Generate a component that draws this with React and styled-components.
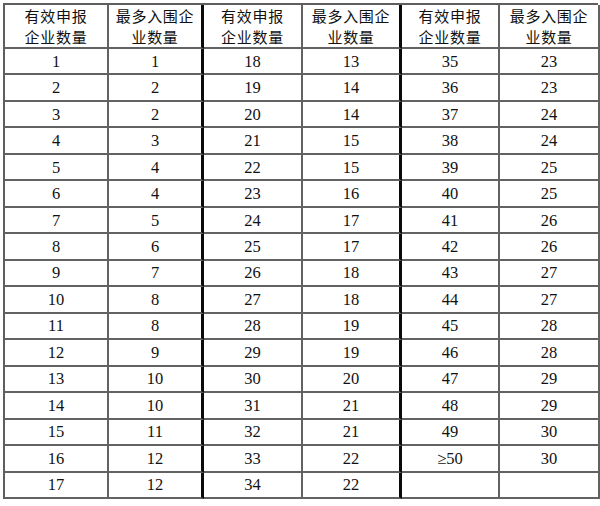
import React from "react";
import styled, { createGlobalStyle } from "styled-components";

const Global = createGlobalStyle`
  html, body { margin: 0; padding: 0; background: #fff; }
  body { width: 600px; height: 506px; overflow: hidden; }
`;

const Grid = styled.div`
  margin: 3px 0 0 3px;
  width: 595px;
  height: 496px;
  box-sizing: border-box;
  display: grid;
  grid-template-columns: 104px 95px 99px 99px 98px 100px;
  grid-template-rows: 44px repeat(17, 1fr);
  border-top: 2px solid #5e5e5e;
  border-left: 2px solid #5e5e5e;
`;

const Cell = styled.div`
  box-sizing: border-box;
  display: flex;
  align-items: center;
  justify-content: center;
  border-bottom: 2px solid #626262;
  border-right: ${(p) => (p.$thick ? "3px solid #0a0a0a" : "2px solid #626262")};
  font-family: "Liberation Serif", "Times New Roman", serif;
  font-size: 16.5px;
  color: #111;
  padding-top: 1px;
`;

const HeadCell = styled(Cell)`
  flex-direction: column;
  font-family: "Noto Sans CJK SC", "Noto Sans", sans-serif;
  font-size: 15px;
  font-weight: 400;
  letter-spacing: 0.7px;
  line-height: 21px;
  color: #111;
  padding-top: 0;
`;

const col2 = [1, 2, 2, 3, 4, 4, 5, 6, 7, 8, 8, 9, 10, 10, 11, 12, 12];
const col4 = [13, 14, 14, 15, 15, 16, 17, 17, 18, 18, 19, 19, 20, 21, 21, 22, 22];
const col6 = [23, 23, 24, 24, 25, 25, 26, 26, 27, 27, 28, 28, 29, 29, 30, 30, ""];

const rows = col2.map((_, i) => [
  i + 1,
  col2[i],
  i + 18,
  col4[i],
  i < 15 ? i + 35 : i === 15 ? "≥50" : "",
  col6[i],
]);

const headers = [
  ["有效申报", "企业数量"],
  ["最多入围企", "业数量"],
  ["有效申报", "企业数量"],
  ["最多入围企", "业数量"],
  ["有效申报", "企业数量"],
  ["最多入围企", "业数量"],
];

const thick = (c) => c === 1 || c === 3;

export default function App() {
  return (
    <>
      <Global />
      <Grid>
        {headers.map((h, c) => (
          <HeadCell key={"h" + c} $thick={thick(c)}>
            <span>{h[0]}</span>
            <span>{h[1]}</span>
          </HeadCell>
        ))}
        {rows.map((r, i) =>
          r.map((v, c) => (
            <Cell key={i + "-" + c} $thick={thick(c)}>
              {v}
            </Cell>
          ))
        )}
      </Grid>
    </>
  );
}
